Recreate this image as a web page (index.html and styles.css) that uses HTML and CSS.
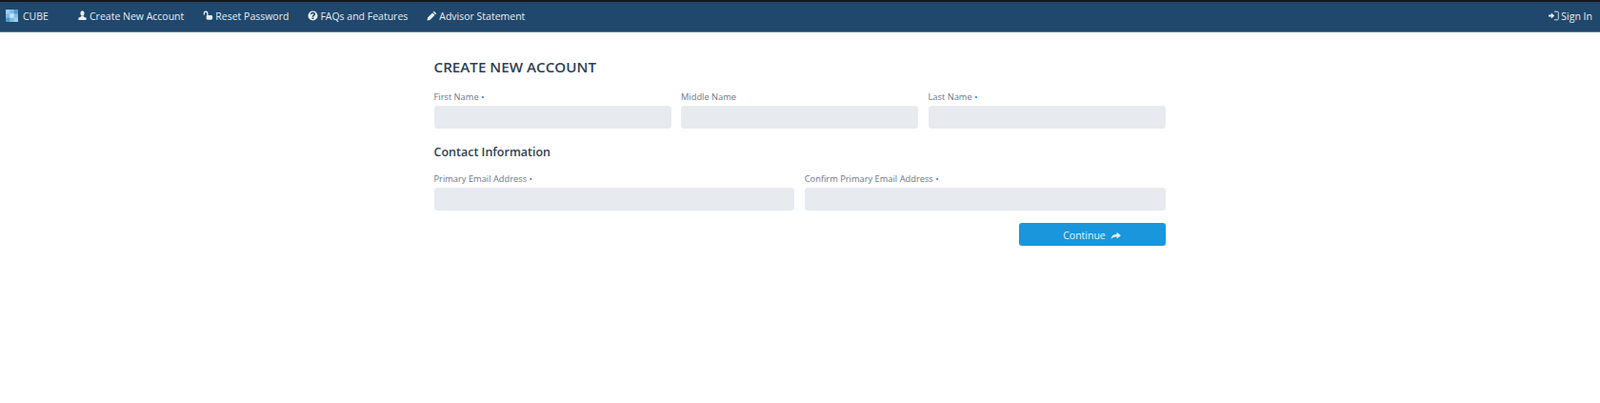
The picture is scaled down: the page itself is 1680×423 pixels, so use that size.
FILE: index.html
```html
<!DOCTYPE html>
<html lang="en">
<head>
    <meta charset="UTF-8">
    <title>CUBE - Create New Account</title>
    <link rel="stylesheet" href="styles.css">
</head>
<body>
    <!-- top navigation -->
    <nav class="navbar">
        <a class="brand" href="#">
            <svg class="logo" viewBox="0 0 12 12" width="13" height="13">
                <rect width="12" height="12" fill="#7dbce6"/>
                <rect x="0" y="0" width="4" height="4" fill="#9fcdec"/>
                <rect x="8" y="0" width="4" height="4" fill="#4f9ad2"/>
                <rect x="4" y="4" width="4" height="4" fill="#cfe6f6"/>
                <rect x="0" y="8" width="4" height="4" fill="#4f9ad2"/>
                <rect x="8" y="8" width="4" height="4" fill="#9fcdec"/>
            </svg>
            CUBE
        </a>
        <a class="nav-link" href="#">
            <svg class="icon" viewBox="0 0 12 12"><ellipse cx="6" cy="3.200" rx="2.300" ry="2.900"/><path d="M4.500 6h3v1.200l3 1.300V11h-9V8.500l3-1.300z"/></svg>
            Create New Account
        </a>
        <a class="nav-link" href="#">
            <svg class="icon" viewBox="0 0 12 12"><path class="open" d="M1.500 5V3.300a1.900 1.900 0 0 1 3.800 0V6"/><rect x="4" y="5.500" width="7" height="5" rx="1.500"/></svg>
            Reset Password
        </a>
        <a class="nav-link" href="#">
            <svg class="icon" viewBox="0 0 12 12"><path fill-rule="evenodd" d="M6 .5a5.500 5.500 0 1 0 0 11 5.500 5.500 0 0 0 0-11zM5 8.200h2v1.600H5zM5 7.400h2c0-1.300 1.800-1.400 1.800-3.200C8.800 2.900 7.600 2 6 2 4.600 2 3.600 2.700 3.200 3.900l1.500.6C4.900 3.900 5.300 3.500 6 3.500c.6 0 1 .3 1 .8C7 5.200 5 5.500 5 7.400z"/></svg>
            FAQs and Features
        </a>
        <a class="nav-link" href="#">
            <svg class="icon" viewBox="0 0 12 12"><path d="M8.500.8l2.700 2.700-1.200 1.200-2.700-2.700zM6.700 2.600l2.700 2.700-5.600 5.600-3.300.6.600-3.300z"/></svg>
            Advisor Statement
        </a>
        <a class="nav-link sign-in" href="#">
            <svg class="icon" viewBox="0 0 12 12"><path d="M0 4.800h3V2.700L6.800 6 3 9.300V7.200H0z"/><path class="thin" d="M6.500 1.300h3.700a1 1 0 0 1 1 1v7.400a1 1 0 0 1-1 1H6.500"/></svg>
            Sign In
        </a>
    </nav>

    <main class="content">
        <h1>CREATE NEW ACCOUNT</h1>

        <form>
            <div class="form-row">
                <div class="form-group">
                    <label for="first-name">First Name <span class="req">•</span></label>
                    <input type="text" id="first-name">
                </div>
                <div class="form-group">
                    <label for="middle-name">Middle Name</label>
                    <input type="text" id="middle-name">
                </div>
                <div class="form-group">
                    <label for="last-name">Last Name <span class="req">•</span></label>
                    <input type="text" id="last-name">
                </div>
            </div>

            <h2>Contact Information</h2>

            <div class="form-row">
                <div class="form-group">
                    <label for="email">Primary Email Address <span class="req">•</span></label>
                    <input type="email" id="email">
                </div>
                <div class="form-group">
                    <label for="email-confirm">Confirm Primary Email Address <span class="req">•</span></label>
                    <input type="email" id="email-confirm">
                </div>
            </div>

            <div class="form-actions">
                <button type="submit">
                    Continue
                    <svg class="icon" viewBox="0 0 12 12"><path d="M7.300 1.800L12 5.600 7.300 9.400V7.100C4 7 2 7.900.5 10 .8 6.600 3.200 4.300 7.300 4.100z"/></svg>
                </button>
            </div>
        </form>
    </main>
</body>
</html>
```

FILE: styles.css
```css
* {
    box-sizing: border-box;
}

body {
    margin: 0;
    background: #fff;
    font-family: "Open Sans", "Noto Sans", sans-serif;
}

.navbar {
    display: flex;
    align-items: center;
    height: 34px;
    padding: 0 8px 2px 6px;
    background: #20476c;
    border-top: 2px solid #17191c;
    border-bottom: 1px solid #5e7d9b;
    font-size: 10.500px;
}

.navbar a {
    color: #e8edf2;
    text-decoration: none;
}

.brand {
    display: flex;
    align-items: center;
    gap: 5px;
    width: 75px;
}

.logo {
    flex: none;
}

.nav-link {
    display: flex;
    align-items: center;
    gap: 2px;
    margin-right: 20px;
}

.sign-in {
    margin-left: auto;
    margin-right: 0;
}

.icon {
    width: 11px;
    height: 11px;
    fill: currentColor;
    flex: none;
}

.icon .open {
    fill: none;
    stroke: currentColor;
    stroke-width: 1.500;
}

.icon .thin {
    fill: none;
    stroke: currentColor;
    stroke-width: 1;
}

.content {
    width: 768px;
    margin-left: 455.500px;
}

h1 {
    margin: 26px 0 0;
    color: #2f3f55;
    font-size: 15.200px;
    font-weight: 600;
    line-height: 20px;
}

h2 {
    margin: 17px 0 0;
    color: #2f3f55;
    font-size: 12.500px;
    font-weight: 600;
    line-height: 16px;
}

.form-row {
    display: flex;
    gap: 10.500px;
    margin-top: 15px;
}

h2 + .form-row {
    margin-top: 13px;
}

.form-group {
    flex: 1;
}

label {
    display: block;
    margin-bottom: 2px;
    color: #6c7686;
    font-size: 9.300px;
    line-height: 14px;
}

.req {
    color: #3f7fd6;
}

input {
    display: block;
    width: 100%;
    height: 24px;
    border: 1px solid #e8ebf0;
    border-radius: 3px;
    background: #e7eaef;
}

.form-actions {
    display: flex;
    justify-content: flex-end;
    margin-top: 13px;
}

button {
    display: flex;
    align-items: center;
    justify-content: center;
    gap: 5px;
    width: 154px;
    height: 24px;
    padding: 2px 0 0;
    border: none;
    border-radius: 3px;
    background: #1a96dc;
    color: #e8f4fb;
    font-family: inherit;
    font-size: 10.500px;
}
```
